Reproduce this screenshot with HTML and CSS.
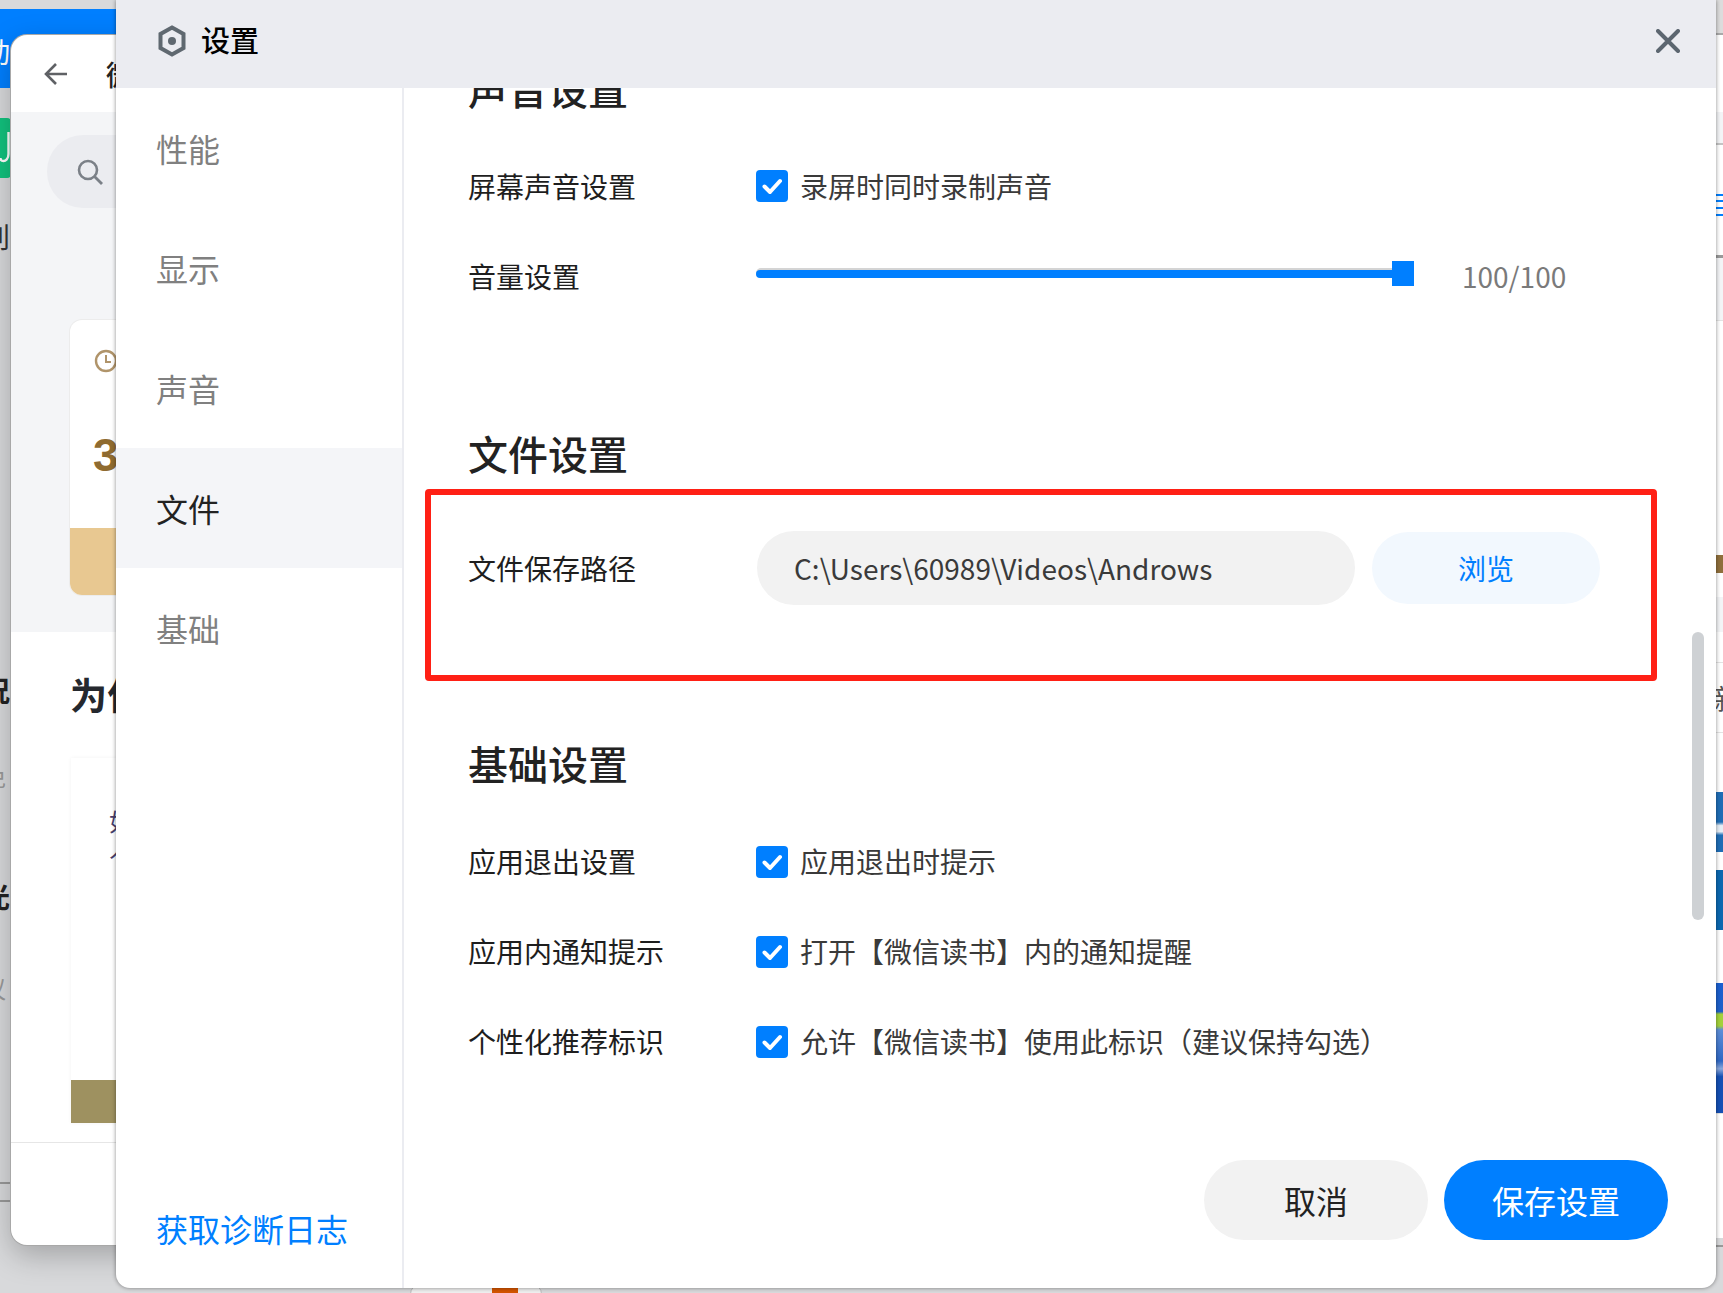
FILE: index.html
```html
<!DOCTYPE html>
<html lang="zh-CN">

<head>
    <meta charset="UTF-8">
    <title>设置</title>
    <link rel="stylesheet" href="styles.css">
</head>

<body>

    <!-- windows behind the settings dialog -->
    <div class="banner"></div>

    <div class="edge-left">
        <span class="edge-char banner-char">动</span>
        <div class="edge-app">
            <svg viewBox="0 0 11 60" width="11" height="60">
                <path d="M8.5 14v22c0 5-3 7-5 7s-3-1-3-3" fill="none" stroke="#fff" stroke-width="2.4" />
            </svg>
        </div>
        <span class="edge-char dark-char char-a">别</span>
        <span class="edge-char bold-char char-b">况</span>
        <span class="edge-char faint-char char-c">免</span>
        <span class="edge-char bold-char char-d">光</span>
        <span class="edge-char faint-char char-e">议</span>
        <div class="edge-box"></div>
    </div>

    <div class="edge-right">
        <div class="strip strip-top"></div>
        <div class="strip strip-white-a"></div>
        <div class="strip strip-pale-a"></div>
        <div class="strip strip-white-b">
            <span class="strip-char">目</span>
        </div>
        <div class="strip strip-pale-b"></div>
        <div class="strip strip-white-c"></div>
        <div class="strip strip-brown"></div>
        <div class="strip strip-white-d"></div>
        <div class="strip strip-pale-c"></div>
        <div class="strip strip-white-e">
            <span class="strip-char grey-char">新</span>
        </div>
        <div class="strip strip-blue-a"></div>
        <div class="strip strip-white-f"></div>
        <div class="strip strip-blue-b"></div>
        <div class="strip strip-white-g"></div>
        <div class="strip strip-blue-c"></div>
        <div class="strip strip-white-h"></div>
    </div>

    <div class="bottom-pill">
        <div class="bottom-chip"></div>
    </div>

    <div class="app-window">
        <div class="app-top">
            <svg class="back-icon" viewBox="0 0 24 24" width="24" height="24">
                <path d="M23 12H2M12 2 2 12l10 10" fill="none" stroke="#5f6165" stroke-width="2.6" />
            </svg>
            <span class="app-title">微信读书</span>
        </div>
        <div class="app-panel">
            <div class="search-pill">
                <svg viewBox="0 0 26 26" width="26" height="26">
                    <circle cx="11" cy="11" r="9" fill="none" stroke="#7b8087" stroke-width="2.6" />
                    <path d="M17.5 17.5 25 25" stroke="#7b8087" stroke-width="2.8" />
                </svg>
            </div>
            <div class="time-card">
                <div class="time-card-body">
                    <svg viewBox="0 0 24 24" width="24" height="24">
                        <circle cx="12" cy="12" r="10" fill="none" stroke="#b0946a" stroke-width="2.4" />
                        <path d="M12 6v7h5" fill="none" stroke="#b0946a" stroke-width="2" />
                    </svg>
                    <div class="time-num">3</div>
                </div>
                <div class="time-card-foot"></div>
            </div>
        </div>
        <div class="app-list">
            <h2>为什么</h2>
            <div class="book-card">
                <div class="book-text">如<br>人</div>
                <div class="book-foot"></div>
            </div>
        </div>
    </div>

    <div class="dialog">
        <header class="dialog-head">
            <svg class="logo" viewBox="0 0 28 32" width="28" height="32">
                <path d="M14 2.5 25.5 9v14L14 29.5 2.5 23V9z" fill="none" stroke="#5f6870" stroke-width="4" />
                <circle cx="14" cy="16" r="4" fill="#5f6870" />
            </svg>
            <span class="dialog-title">设置</span>
            <svg class="close" viewBox="0 0 24 24" width="24" height="24">
                <path d="M2 2l20 20M22 2 2 22" stroke="#5c6670" stroke-width="4" stroke-linecap="round" />
            </svg>
        </header>

        <div class="dialog-body">
            <nav class="side">
                <a class="side-item">性能</a>
                <a class="side-item">显示</a>
                <a class="side-item">声音</a>
                <a class="side-item active">文件</a>
                <a class="side-item">基础</a>
                <a class="side-link">获取诊断日志</a>
            </nav>

            <div class="main">
                <div class="scroller">
                    <div class="scroll-content">
                        <section class="section-sound">
                            <h3>声音设置</h3>
                            <div class="row">
                                <label>屏幕声音设置</label>
                                <span class="check"><svg viewBox="0 0 32 32" width="32" height="32"><path d="M8.5 16.5l5.5 5.5 10-11" fill="none" stroke="#fff" stroke-width="4" stroke-linecap="round" stroke-linejoin="round" /></svg></span>
                                <span class="check-text">录屏时同时录制声音</span>
                            </div>
                            <div class="row">
                                <label>音量设置</label>
                                <div class="slider">
                                    <div class="slider-fill"></div>
                                    <div class="slider-thumb"></div>
                                </div>
                                <span class="slider-value">100/100</span>
                            </div>
                        </section>

                        <section class="section-file">
                            <h3>文件设置</h3>
                            <div class="row">
                                <label>文件保存路径</label>
                                <div class="path-input">C:\Users\60989\Videos\Androws</div>
                                <button class="browse">浏览</button>
                            </div>
                            <div class="highlight"></div>
                        </section>

                        <section class="section-basic">
                            <h3>基础设置</h3>
                            <div class="row">
                                <label>应用退出设置</label>
                                <span class="check"><svg viewBox="0 0 32 32" width="32" height="32"><path d="M8.5 16.5l5.5 5.5 10-11" fill="none" stroke="#fff" stroke-width="4" stroke-linecap="round" stroke-linejoin="round" /></svg></span>
                                <span class="check-text">应用退出时提示</span>
                            </div>
                            <div class="row">
                                <label>应用内通知提示</label>
                                <span class="check"><svg viewBox="0 0 32 32" width="32" height="32"><path d="M8.5 16.5l5.5 5.5 10-11" fill="none" stroke="#fff" stroke-width="4" stroke-linecap="round" stroke-linejoin="round" /></svg></span>
                                <span class="check-text">打开【微信读书】内的通知提醒</span>
                            </div>
                            <div class="row">
                                <label>个性化推荐标识</label>
                                <span class="check"><svg viewBox="0 0 32 32" width="32" height="32"><path d="M8.5 16.5l5.5 5.5 10-11" fill="none" stroke="#fff" stroke-width="4" stroke-linecap="round" stroke-linejoin="round" /></svg></span>
                                <span class="check-text">允许【微信读书】使用此标识（建议保持勾选）</span>
                            </div>
                        </section>
                    </div>
                    <div class="scroll-thumb"></div>
                </div>

                <div class="dialog-foot">
                    <button class="btn btn-cancel">取消</button>
                    <button class="btn btn-save">保存设置</button>
                </div>
            </div>
        </div>
    </div>

</body>

</html>
```

FILE: styles.css
```css
html,
body {
    margin: 0;
    padding: 0;
}

body {
    position: relative;
    width: 1723px;
    height: 1293px;
    overflow: hidden;
    background-color: #d8d9db;
    font-family: "Noto Sans CJK SC", "Noto Sans", sans-serif;
    color: #333;
}

/* background windows */
.banner {
    position: absolute;
    left: 0;
    top: 9px;
    width: 130px;
    height: 79px;
    background-color: #007fff;
}

.edge-left {
    position: absolute;
    left: 0;
    top: 0;
    width: 11px;
    height: 1245px;
    overflow: hidden;
}

.edge-char {
    position: absolute;
    left: -18px;
    font-size: 28px;
    line-height: 36px;
}

.banner-char {
    top: 33px;
    color: #fff;
}

.dark-char {
    color: #333;
}

.bold-char {
    font-weight: 700;
    color: #222;
}

.faint-char {
    color: #999;
    font-size: 24px;
}

.char-a {
    top: 218px;
}

.char-b {
    top: 672px;
}

.char-c {
    top: 758px;
}

.char-d {
    top: 878px;
}

.char-e {
    top: 970px;
}

.edge-app {
    position: absolute;
    left: 0;
    top: 118px;
    width: 11px;
    height: 60px;
    border-radius: 0 4px 4px 0;
    background-color: #12c27e;
}

.edge-app svg {
    display: block;
}

.edge-box {
    position: absolute;
    left: -6px;
    top: 1182px;
    width: 14px;
    height: 16px;
    border: 2px solid #999;
}

.edge-right {
    position: absolute;
    left: 1716px;
    top: 0;
    width: 7px;
    height: 1245px;
    display: flex;
    flex-direction: column;
    overflow: hidden;
    border-bottom: 2px solid #999;
}

.strip {
    flex: none;
    position: relative;
    background-color: #fff;
}

.strip-char {
    position: absolute;
    left: -10px;
    top: 41px;
    font-size: 28px;
    line-height: 36px;
    color: #007fff;
}

.grey-char {
    left: -2px;
    top: 48px;
    color: #555;
}

.strip-top {
    height: 35px;
    background-color: #dcdcdc;
    border-bottom: 2px solid #aaa;
    box-sizing: border-box;
}

.strip-white-a {
    height: 77px;
}

.strip-pale-a {
    height: 33px;
    background-color: #f3f4f6;
    border-bottom: 2px solid #c4c4c4;
    box-sizing: border-box;
}

.strip-white-b {
    height: 113px;
    border-bottom: 3px solid #999;
    box-sizing: border-box;
}

.strip-pale-b {
    height: 62px;
    background-color: #f3f4f6;
    border-bottom: 1px solid #e3e3e3;
}

.strip-white-c {
    height: 234px;
}

.strip-brown {
    height: 18px;
    background-color: #8f6f3c;
}

.strip-white-d {
    height: 24px;
}

.strip-pale-c {
    height: 35px;
    background-color: #f3f4f6;
}

/* two hairlines run across this list row */
.strip-white-e {
    height: 160px;
    background-image: linear-gradient(#e3e3e3, #e3e3e3), linear-gradient(#e3e3e3, #e3e3e3);
    background-size: 100% 1px, 100% 1px;
    background-position: 0 30px, 0 100px;
    background-repeat: no-repeat;
}

.strip-blue-a {
    height: 60px;
    background: linear-gradient(180deg, #1f6db5 0%, #1f6db5 50%, #e6eef6 56%, #e6eef6 66%, #1f6db5 72%, #1f6db5 100%);
}

.strip-white-f {
    height: 18px;
}

.strip-blue-b {
    height: 60px;
    background-color: #0c68b0;
}

.strip-white-g {
    height: 53px;
}

.strip-blue-c {
    height: 130px;
    background: linear-gradient(180deg, #1a5fd0 0%, #1f60c8 22%, #a3d13a 24%, #a3d13a 33%, #5d8ed8 36%, #2f68c4 60%, #8aa8dc 66%, #1550b4 72%, #1550b4 100%);
}

.strip-white-h {
    height: 124px;
    border-top: 1px solid #e3e3e3;
}

.bottom-pill {
    position: absolute;
    left: 410px;
    top: 1284px;
    width: 132px;
    height: 20px;
    border: 1px solid #bbb;
    border-radius: 10px;
    background-color: #eee;
    box-sizing: border-box;
}

.bottom-chip {
    position: absolute;
    left: 81px;
    top: 0;
    width: 26px;
    height: 12px;
    background-color: #d35400;
}

.app-window {
    position: absolute;
    left: 11px;
    top: 35px;
    width: 300px;
    height: 1210px;
    display: flex;
    flex-direction: column;
    overflow: hidden;
    background-color: #fff;
    border-radius: 16px;
    box-shadow: 0 0 0 1px #a8a8a8, 0 10px 30px rgba(0, 0, 0, 0.25);
}

.app-top {
    flex: none;
    height: 77px;
    display: flex;
    align-items: center;
    gap: 38px;
    padding-left: 33px;
    box-sizing: border-box;
}

.app-title {
    font-size: 28px;
    font-weight: 500;
    color: #222;
    white-space: nowrap;
}

.app-panel {
    flex: none;
    height: 520px;
    padding: 23px 0 0 36px;
    box-sizing: border-box;
    background-color: #f4f5f7;
}

.search-pill {
    height: 73px;
    width: 400px;
    display: flex;
    align-items: center;
    padding-left: 30px;
    box-sizing: border-box;
    border-radius: 36px;
    background-color: #ebecf0;
}

.time-card {
    display: flex;
    flex-direction: column;
    width: 300px;
    height: 275px;
    margin: 112px 0 0 23px;
    overflow: hidden;
    box-sizing: border-box;
    border-radius: 12px;
    background-color: #fff;
    box-shadow: 0 0 0 1px #ececec;
}

.time-card-body {
    flex: 1;
    padding: 29px 0 0 24px;
}

.time-num {
    margin-top: 52px;
    margin-left: -1px;
    font-family: "Liberation Sans", sans-serif;
    font-size: 46px;
    font-weight: 700;
    line-height: 50px;
    color: #8f6b30;
}

.time-card-foot {
    flex: none;
    height: 67px;
    background-color: #e8c891;
}

.app-list {
    flex: none;
    height: 511px;
    padding: 37px 0 0 59px;
    box-sizing: border-box;
    border-bottom: 1px solid #e6e6e6;
}

.app-list h2 {
    margin: 0;
    font-size: 37px;
    font-weight: 700;
    line-height: 50px;
    color: #25282e;
    white-space: nowrap;
}

.book-card {
    display: flex;
    flex-direction: column;
    height: 365px;
    margin: 39px 0 0 1px;
    box-shadow: 0 0 4px rgba(0, 0, 0, 0.05);
}

.book-text {
    flex: 1;
    padding: 50px 0 0 38px;
    font-size: 24px;
    line-height: 26px;
    color: #4a3f6b;
}

.book-foot {
    flex: none;
    height: 43px;
    background-color: #9e9160;
}

.back-icon {
    flex: none;
}

/* settings dialog */
.dialog {
    position: absolute;
    left: 116px;
    top: 0;
    width: 1600px;
    height: 1288px;
    display: flex;
    flex-direction: column;
    overflow: hidden;
    background-color: #fff;
    border-radius: 0 0 14px 14px;
    box-shadow: 0 0 4px rgba(0, 0, 0, 0.45);
}

.dialog-head {
    flex: none;
    height: 88px;
    display: flex;
    align-items: center;
    padding: 0 36px 7px 42px;
    box-sizing: border-box;
    background-color: #ebecf1;
}

.logo {
    margin-right: 15px;
}

.dialog-title {
    flex: 1;
    margin-bottom: 4px;
    font-size: 29px;
    font-weight: 500;
    color: #000;
}

.dialog-body {
    flex: 1;
    display: flex;
    min-height: 0;
}

.side {
    flex: none;
    width: 288px;
    display: flex;
    flex-direction: column;
    box-sizing: border-box;
    border-right: 2px solid #ebecf1;
}

.side-item {
    height: 120px;
    display: flex;
    align-items: center;
    padding-left: 40px;
    font-size: 32px;
    color: #808080;
}

.side-item.active {
    background-color: #f4f5f8;
    color: #222;
}

.side-link {
    margin-top: auto;
    padding: 0 0 38px 40px;
    font-size: 32px;
    line-height: 44px;
    color: #007fff;
    white-space: nowrap;
}

.main {
    flex: 1;
    display: flex;
    flex-direction: column;
    min-width: 0;
}

.scroller {
    position: relative;
    flex: 1;
    min-height: 0;
    overflow: hidden;
}

.scroll-content {
    margin-top: -30px;
    padding-left: 64px;
}

.scroll-thumb {
    position: absolute;
    right: 12px;
    top: 544px;
    width: 12px;
    height: 288px;
    border-radius: 6px;
    background-color: #ced1d4;
}

section {
    position: relative;
}

h3 {
    margin: 0 0 23px;
    font-size: 40px;
    font-weight: 500;
    line-height: 60px;
    color: #222;
}

.section-sound {
    margin-bottom: 102px;
}

.section-sound h3 {
    margin-bottom: 23px;
}

.section-file {
    margin-bottom: 120px;
}

.section-file h3 {
    margin-bottom: 40px;
}

.section-basic .check {
    margin-top: 2px;
}

.row {
    height: 90px;
    display: flex;
    align-items: center;
    font-size: 28px;
    color: #333;
}

label {
    flex: none;
    width: 288px;
    color: #1e1e1e;
}

.check {
    flex: none;
    width: 32px;
    height: 32px;
    margin-right: 12px;
    border-radius: 4px;
    background-color: #007fff;
}

.check svg {
    display: block;
}

.check-text {
    color: #3a3a3a;
}

.slider {
    position: relative;
    flex: none;
    width: 658px;
    height: 10px;
    margin: -6px 48px 0 0;
    border-radius: 5px;
    background-color: #d4d4d4;
}

.slider-fill {
    position: absolute;
    left: 0;
    right: 0;
    top: 2px;
    height: 8px;
    border-radius: 4px;
    background-color: #007fff;
}

.slider-thumb {
    position: absolute;
    right: 0;
    top: -7px;
    width: 22px;
    height: 25px;
    background-color: #007fff;
}

.slider-value {
    color: #7a7a7a;
}

.path-input {
    flex: none;
    width: 598px;
    height: 74px;
    margin-left: 1px;
    display: flex;
    align-items: center;
    padding-left: 37px;
    box-sizing: border-box;
    border-radius: 37px;
    background-color: #f2f2f2;
    color: #3a3a3a;
}

.browse {
    flex: none;
    width: 228px;
    height: 72px;
    margin-left: 17px;
    padding: 0;
    border: none;
    border-radius: 36px;
    background-color: #f2f8fe;
    font-family: inherit;
    font-size: 28px;
    color: #007fff;
}

/* red frame around the path row */
.highlight {
    position: absolute;
    left: -43px;
    top: 66px;
    width: 1232px;
    height: 192px;
    box-sizing: border-box;
    border: 6px solid #ff2015;
    border-radius: 4px;
}

.dialog-foot {
    flex: none;
    display: flex;
    justify-content: flex-end;
    gap: 16px;
    padding: 0 48px 48px 0;
}

.btn {
    width: 224px;
    height: 80px;
    padding: 0;
    border: none;
    border-radius: 40px;
    font-family: inherit;
    font-size: 32px;
}

.btn-cancel {
    background-color: #f2f2f2;
    color: #222;
}

.btn-save {
    background-color: #007fff;
    color: #fff;
}
```
